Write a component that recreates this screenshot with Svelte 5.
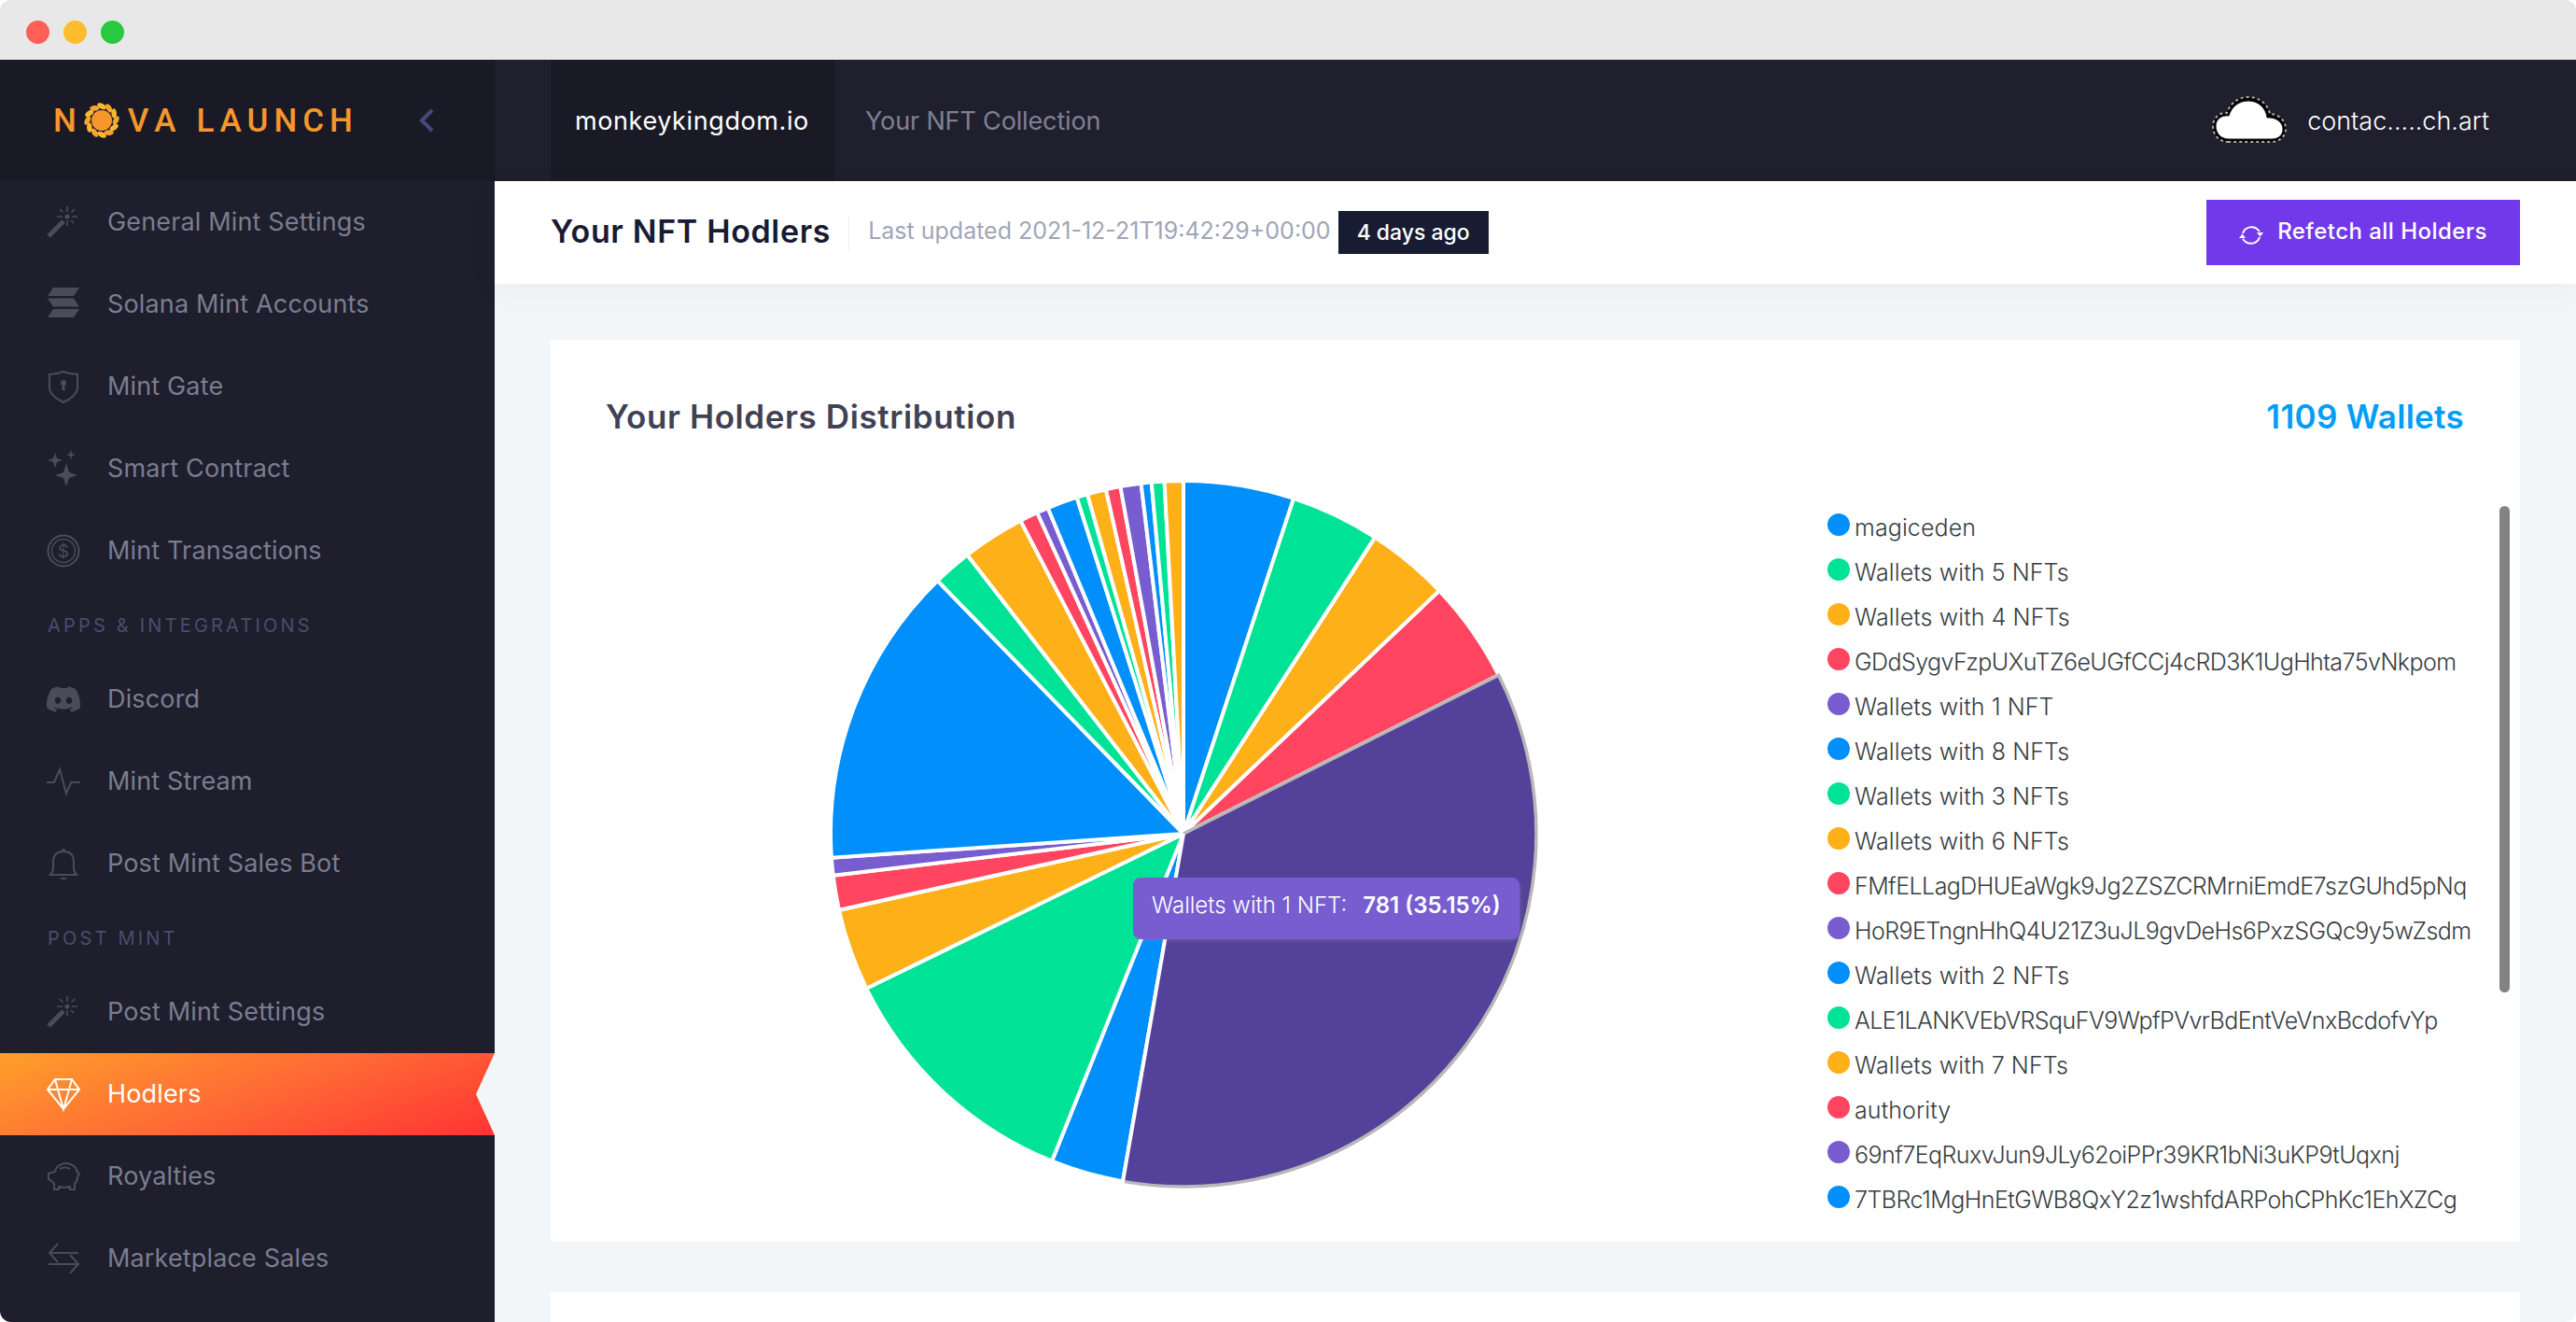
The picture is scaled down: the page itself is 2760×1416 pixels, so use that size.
<script>
  const palette = ['#008ffb', '#00e396', '#feb019', '#ff4560', '#775dd0']
  // slice end angles in degrees, clockwise from 12 o'clock
  const ends = [18.2, 32.9, 46.5, 63.3, 189.9, 201.9, 244, 257.5, 263.2, 266.1, 315.8, 322.2, 332.5, 335.5, 337.4, 342.4, 344.2, 347.3, 349.7, 353.1, 354.8, 356.9, 360]
  const activeIndex = 4
  const cx = 388
  const cy = 388
  const r = 378

  function point(deg, radius) {
    const a = (deg * Math.PI) / 180
    return `${(cx + radius * Math.sin(a)).toFixed(2)} ${(cy - radius * Math.cos(a)).toFixed(2)}`
  }
  function sector(from, to, radius) {
    const large = to - from > 180 ? 1 : 0
    return `M${cx} ${cy} L${point(from, radius)} A${radius} ${radius} 0 ${large} 1 ${point(to, radius)} Z`
  }
  const slices = ends.map((end, i) => ({
    from: i === 0 ? 0 : ends[i - 1],
    to: end,
    color: palette[i % palette.length]
  }))
  const active = slices[activeIndex]

  const legend = [
    'magiceden', 'Wallets with 5 NFTs', 'Wallets with 4 NFTs', 'GDdSygvFzpUXuTZ6eUGfCCj4cRD3K1UgHhta75vNkpom',
    'Wallets with 1 NFT', 'Wallets with 8 NFTs', 'Wallets with 3 NFTs', 'Wallets with 6 NFTs',
    'FMfELLagDHUEaWgk9Jg2ZSZCRMrniEmdE7szGUhd5pNq', 'HoR9ETngnHhQ4U21Z3uJL9gvDeHs6PxzSGQc9y5wZsdm',
    'Wallets with 2 NFTs', 'ALE1LANKVEbVRSquFV9WpfPVvrBdEntVeVnxBcdofvYp', 'Wallets with 7 NFTs', 'authority',
    '69nf7EqRuxvJun9JLy62oiPPr39KR1bNi3uKP9tUqxnj', '7TBRc1MgHnEtGWB8QxY2z1wshfdARPohCPhKc1EhXZCg'
  ]

  const menu = [
    { label: 'General Mint Settings', icon: 'wand' },
    { label: 'Solana Mint Accounts', icon: 'solana' },
    { label: 'Mint Gate', icon: 'shield' },
    { label: 'Smart Contract', icon: 'sparkle' },
    { label: 'Mint Transactions', icon: 'coin' },
    { section: 'Apps & Integrations' },
    { label: 'Discord', icon: 'discord' },
    { label: 'Mint Stream', icon: 'pulse' },
    { label: 'Post Mint Sales Bot', icon: 'bell' },
    { section: 'Post Mint' },
    { label: 'Post Mint Settings', icon: 'wand' },
    { label: 'Hodlers', icon: 'diamond', active: true },
    { label: 'Royalties', icon: 'piggy' },
    { label: 'Marketplace Sales', icon: 'swap' }
  ]
  const sunRays = Array.from({ length: 12 }, (_, i) => i * 30)
</script>

{#snippet icon(name)}
  <svg class="icon" viewBox="0 0 36 36">
    {#if name === 'wand'}
      <path class="thick" d="M2 33 L18 17" />
      <path class="thin" d="M22 1v6M22 16v6M11 12h6M27 12h6M14 4l3.500 3.500M30 4l-3.500 3.500M26 16l3 3" />
      <circle class="solid" cx="22" cy="12" r="2.600" />
    {:else if name === 'solana'}
      <path class="solid" d="M7 0H35L29 9H1ZM1 11.500H29L35 20.500H7ZM7 23H35L29 32H1Z" />
    {:else if name === 'shield'}
      <path class="line" d="M18 2 C23 4 28 5 33 5 V19 C33 26 26 31 18 35 C10 31 3 26 3 19 V5 C8 5 13 4 18 2Z" />
      <circle class="solid" cx="18" cy="14" r="3" />
      <path class="solid" d="M16.800 15h2.400l.6 7h-3.600Z" />
    {:else if name === 'sparkle'}
      <path class="solid" d="M21 12 L24 22 L33 25 L24 28 L21 37 L18 28 L9 25 L18 22Z" />
      <path class="solid" d="M9 1 L11 7 L17 9 L11 11 L9 17 L7 11 L1 9 L7 7Z" />
      <path class="solid" d="M26 -2 L27.200 1.800 L31 3 L27.200 4.200 L26 8 L24.800 4.200 L21 3 L24.800 1.800Z" />
    {:else if name === 'coin'}
      <circle class="line" cx="18" cy="18" r="16.500" />
      <circle class="line thinner" cx="18" cy="18" r="12.500" />
      <text x="18" y="24.500" text-anchor="middle" class="dollar">$</text>
    {:else if name === 'discord'}
      <path class="solid" transform="scale(1.500)" d="M20.317 4.3698a19.7913 19.7913 0 00-4.8851-1.5152.0741.0741 0 00-.0785.0371c-.211.3753-.4447.8648-.6083 1.2495-1.8447-.2762-3.68-.2762-5.4868 0-.1636-.3933-.4058-.8742-.6177-1.2495a.077.077 0 00-.0785-.037 19.7363 19.7363 0 00-4.8852 1.515.0699.0699 0 00-.0321.0277C.5334 9.0458-.319 13.5799.0992 18.0578a.0824.0824 0 00.0312.0561c2.0528 1.5076 4.0413 2.4228 5.9929 3.0294a.0777.0777 0 00.0842-.0276c.4616-.6304.8731-1.2952 1.226-1.9942a.076.076 0 00-.0416-.1057c-.6528-.2476-1.2743-.5495-1.8722-.8923a.077.077 0 01-.0076-.1277c.1258-.0943.2517-.1923.3718-.2914a.0743.0743 0 01.0776-.0105c3.9278 1.7933 8.18 1.7933 12.0614 0a.0739.0739 0 01.0785.0095c.1202.099.246.1981.3728.2924a.077.077 0 01-.0066.1276 12.2986 12.2986 0 01-1.873.8914.0766.0766 0 00-.0407.1067c.3604.698.7719 1.3628 1.225 1.9932a.076.076 0 00.0842.0286c1.961-.6067 3.9495-1.5219 6.0023-3.0294a.077.077 0 00.0313-.0552c.5004-5.177-.8382-9.6739-3.5485-13.6604a.061.061 0 00-.0312-.0286zM8.02 15.3312c-1.1825 0-2.1569-1.0857-2.1569-2.419 0-1.3332.9555-2.4189 2.157-2.4189 1.2108 0 2.1757 1.0952 2.1568 2.419 0 1.3332-.9555 2.4189-2.1569 2.4189zm7.9748 0c-1.1825 0-2.1569-1.0857-2.1569-2.419 0-1.3332.9554-2.4189 2.1569-2.4189 1.2108 0 2.1757 1.0952 2.1568 2.419 0 1.3332-.946 2.4189-2.1568 2.4189Z" />
    {:else if name === 'pulse'}
      <path class="line" d="M0 19 H8 L14 5 L21 31 L26 19 H36" />
    {:else if name === 'bell'}
      <path class="line" d="M4 30 C6 28 7 26 7 22 V16 C7 9 11 5 18 5 C25 5 29 9 29 16 V22 C29 26 30 28 32 30Z" />
      <path class="solid" d="M15.500 5 C15.500 1 20.500 1 20.500 5ZM14 33H22C21 36 15 36 14 33Z" />
    {:else if name === 'diamond'}
      <path class="line" d="M9 2 H27 L35 13 L18 34 L1 13 Z M1 13 H35 M9 2 L12 13 L18 34 L24 13 L27 2" />
    {:else if name === 'piggy'}
      <path class="line" d="M9 13 C10 7 16 4 21 4 C27 4 32 8 33 14 L35 15 L33 19 C33 23 31 25 30 26 V32 H25 V29 C22 30 17 30 13 29 V32 H8 V26 C6 24 5 22 2 21 V15 L5 14 Z" />
      <path class="line" d="M14 10 C17 8 22 8 25 10" />
    {:else if name === 'swap'}
      <path class="line" d="M34 12 H4 M12 2 L3 12 L12 22 M2 24 H33 M25 14 L34 24 L25 34" />
    {/if}
  </svg>
{/snippet}

<div class="window">
  <div class="titlebar">
    <span class="dot red"></span>
    <span class="dot yellow"></span>
    <span class="dot green"></span>
  </div>

  <div class="app">
    <aside class="sidebar">
      <div class="brand">
        <div class="logo">
          <span>N</span>
          <svg class="sun" viewBox="0 0 40 40">
            {#each sunRays as deg}
              <ellipse cx="20" cy="4.800" rx="5.200" ry="2.800" fill={deg % 60 === 0 ? '#fdb92e' : '#f7a52b'} transform="rotate({deg} 20 20) rotate(28 20 4.800)" />
            {/each}
            <circle cx="20" cy="20" r="11" fill="#f7972b" />
          </svg>
          <span class="logo-v">VA</span>
          <span class="logo-word">LAUNCH</span>
        </div>
        <svg class="collapse" viewBox="0 0 16 26"><path d="M14 2 L3 13 L14 24" /></svg>
      </div>
      <nav>
        {#each menu as item}
          {#if item.section}
            <div class="section">{item.section}</div>
          {:else}
            <div class="item" class:active={item.active}>
              {@render icon(item.icon)}
              <span>{item.label}</span>
            </div>
          {/if}
        {/each}
      </nav>
    </aside>

    <div class="page">
      <header class="topbar">
        <div class="tab current">monkeykingdom.io</div>
        <div class="tab">Your NFT Collection</div>
        <div class="account">
          <svg class="cloud" viewBox="0 0 80 52">
            <path class="cloud-out" d="M18 49 C7 49 1 41 1 32 C1 23 9 17 16 18 C19 8 28 1 39 1 C51 1 60 9 62 19 C71 19 79 26 79 35 C79 43 72 49 64 49 Z" />
            <path class="cloud-in" d="M18 46 C9 46 4 39 4 32 C4 25 10 20 18 21 C21 11 29 5 39 5 C50 5 58 13 59 23 C68 22 76 28 76 35 C76 42 71 46 64 46 Z" />
          </svg>
          <span>contac.....ch.art</span>
        </div>
      </header>

      <div class="subheader">
        <h1>Your NFT Hodlers</h1>
        <span class="updated">Last updated 2021-12-21T19:42:29+00:00</span>
        <span class="badge">4 days ago</span>
        <button type="button" class="refetch">
          <svg viewBox="0 0 26 24">
            <path d="M4 10 C6 3 16 0 22 8" />
            <path d="M22 14 C20 21 10 24 4 16" />
            <path class="head" d="M19 9 L26 9 L22.500 13.500Z" />
            <path class="head" d="M0 15 L7 15 L3.500 10.500Z" />
          </svg>
          <span>Refetch all Holders</span>
        </button>
      </div>

      <main>
        <section class="card">
          <div class="card-head">
            <h2>Your Holders Distribution</h2>
            <span class="wallets">1109 Wallets</span>
          </div>
          <div class="card-body">
            <div class="chart">
              <svg width="776" height="776" viewBox="0 0 776 776">
                {#each slices as s, i}
                  {#if i !== activeIndex}
                    <path d={sector(s.from, s.to, r)} fill={s.color} stroke="#fff" stroke-width="4" />
                  {/if}
                {/each}
                <path d={sector(active.from, active.to, r - 1)} fill="#54429a" />
                <path class="hover-edge" d="M{cx} {cy} L{point(active.from, r)} A{r} {r} 0 0 1 {point(active.to, r)}" />
                <path d="M{cx} {cy} L{point(active.to, r + 3)}" stroke="#fff" stroke-width="4" />
              </svg>
              <div class="tooltip">
                <span>Wallets with 1 NFT:</span>
                <b>781 (35.15%)</b>
              </div>
            </div>
            <div class="legend">
              {#each legend as name, i}
                <div class="legend-row">
                  <span class="marker" style="background: {palette[i % palette.length]}"></span>
                  <span class="legend-text" class:long={name.length > 30}>{name}</span>
                </div>
              {/each}
              <div class="scrollbar"></div>
            </div>
          </div>
        </section>
        <section class="card next"></section>
      </main>
    </div>
  </div>
</div>

<style>
  :global(body) {
    background: #fff;
    font-family: Inter, "Noto Sans", sans-serif;
  }
  .window {
    width: 2760px;
    height: 1416px;
    display: flex;
    flex-direction: column;
    overflow: hidden;
    border-radius: 12px;
  }
  .titlebar {
    height: 64px;
    flex: none;
    display: flex;
    align-items: center;
    gap: 15px;
    padding-left: 28px;
    background: #e8e8e8;
    box-sizing: border-box;
    padding-top: 4px;
  }
  .dot {
    width: 25px;
    height: 25px;
    border-radius: 50%;
  }
  .red { background: #ff5f57; }
  .yellow { background: #febc2e; }
  .green { background: #28c840; }

  .app {
    flex: 1;
    display: flex;
    min-height: 0;
  }
  .sidebar {
    width: 530px;
    flex: none;
    background: #1e1e2d;
  }
  .brand {
    height: 130px;
    background: #1a1a27;
    display: flex;
    align-items: center;
    padding-left: 57px;
    position: relative;
  }
  .logo {
    display: flex;
    align-items: center;
    color: #f7972b;
    font: 500 35px Roboto, sans-serif;
    letter-spacing: 6px;
    line-height: 1;
  }
  .sun {
    width: 40px;
    height: 40px;
    margin: 0 8px 0 1px;
  }
  .logo-v { letter-spacing: 7px; }
  .logo-word { margin-left: 15px; }
  .collapse {
    width: 16px;
    height: 26px;
    margin-left: auto;
    margin-right: 65px;
    fill: none;
    stroke: #454a7c;
    stroke-width: 4;
  }
  .item {
    height: 88px;
    display: flex;
    align-items: center;
    gap: 29px;
    padding-left: 50px;
    color: #7a7d90;
    font-size: 27px;
    font-weight: 400;
    letter-spacing: 0.15px;
    position: relative;
  }
  .item span { margin-bottom: 2px; }
  .section {
    height: 71px;
    display: flex;
    align-items: center;
    padding-left: 51px;
    color: #4b4d6c;
    font-size: 20px;
    text-transform: uppercase;
    letter-spacing: 3.200px;
  }
  .icon {
    width: 36px;
    height: 36px;
    flex: none;
    overflow: visible;
    color: #4a4c59;
  }
  .icon .solid { fill: currentColor; }
  .icon .line, .icon .thin, .icon .thick {
    fill: none;
    stroke: currentColor;
    stroke-width: 2;
  }
  .icon .thin { stroke-width: 1.600; }
  .icon .thick { stroke-width: 5; }
  .icon .thinner { stroke-width: 1.500; }
  .icon .dollar {
    fill: currentColor;
    font: 400 19px Inter, sans-serif;
  }
  .item.active {
    color: #fff;
    background: linear-gradient(160deg, #ff9f2b 0%, #ff6b35 50%, #ff3333 100%);
  }
  .item.active .icon { color: #fff; }
  .item.active::after {
    content: '';
    position: absolute;
    right: 0;
    top: 0;
    width: 20px;
    height: 100%;
    background: #f3f6f9;
    clip-path: polygon(100% 0, 0 50%, 100% 100%);
  }

  .page {
    flex: 1;
    min-width: 0;
    display: flex;
    flex-direction: column;
    background: #f3f6f9;
  }
  .topbar {
    height: 130px;
    flex: none;
    display: flex;
    align-items: center;
    padding-left: 60px;
    background: #1f1f2d;
  }
  .tab {
    height: 100%;
    display: flex;
    align-items: center;
    padding: 0 26px;
    color: #7f8095;
    font-size: 27px;
    letter-spacing: -0.15px;
  }
  .tab.current {
    color: #fff;
    background: #1a1a27;
    box-sizing: border-box;
    width: 304px;
    margin-right: 7px;
    letter-spacing: 0.6px;
  }
  .account {
    margin-left: auto;
    margin-right: 93px;
    display: flex;
    align-items: center;
    gap: 22px;
    color: #fff;
    font-size: 27px;
    font-weight: 300;
  }
  .cloud {
    width: 80px;
    height: 52px;
  }
  .cloud-out {
    fill: #000;
    stroke: #aaa;
    stroke-width: 2;
    stroke-dasharray: 3 3;
  }
  .cloud-in {
    fill: #fff;
    stroke: #111;
    stroke-width: 1;
  }

  .subheader {
    height: 110px;
    flex: none;
    display: flex;
    align-items: center;
    padding: 0 60px;
    background: #fff;
    box-shadow: 0 8px 30px rgba(82, 63, 105, 0.05);
    position: relative;
  }
  h1 {
    margin: 0;
    padding-right: 19px;
    height: 40px;
    line-height: 38px;
    border-right: 1px solid #eff2f5;
    color: #181c32;
    font-size: 34px;
    font-weight: 600;
    letter-spacing: 0.65px;
  }
  .updated {
    margin: 0 0 4px 20px;
    color: #a1a5b7;
    font-size: 25px;
  }
  .badge {
    margin-left: 8px;
    height: 46px;
    padding: 0 20px;
    display: flex;
    align-items: center;
    background: #181c32;
    color: #fff;
    font-size: 23px;
    font-weight: 500;
  }
  .refetch {
    margin-left: auto;
    width: 336px;
    height: 70px;
    border: none;
    display: flex;
    align-items: center;
    justify-content: center;
    gap: 15px;
    background: #7239ea;
    color: #fff;
    font: 500 24px Inter, sans-serif;
    letter-spacing: 0.45px;
  }
  .refetch span { margin-bottom: 4px; }
  .refetch svg {
    width: 26px;
    height: 24px;
    fill: none;
    stroke: #fff;
    stroke-width: 2;
    margin-top: 6px;
  }
  .refetch .head {
    fill: #fff;
    stroke: none;
  }

  main {
    flex: 1;
    min-height: 0;
    overflow: hidden;
    padding: 60px 60px 0;
  }
  .card {
    height: 966px;
    background: #fff;
  }
  .card.next {
    margin-top: 54px;
    height: 400px;
  }
  .card-head {
    height: 141px;
    box-sizing: border-box;
    padding: 58px 60px 0 59px;
    display: flex;
    justify-content: space-between;
    align-items: flex-start;
  }
  h2 {
    margin: 0;
    line-height: 48px;
    color: #3f4254;
    font-size: 35px;
    font-weight: 600;
    letter-spacing: 0.6px;
  }
  .wallets {
    line-height: 48px;
    color: #009ef7;
    font-size: 35px;
    font-weight: 600;
    letter-spacing: 0.3px;
  }
  .card-body {
    display: flex;
    padding-left: 290px;
  }
  .chart {
    width: 776px;
    height: 776px;
    flex: none;
    position: relative;
  }
  .chart svg { display: block; overflow: visible; }
  .hover-edge {
    fill: none;
    stroke: #b8b8b8;
    stroke-width: 3.500;
  }
  .tooltip {
    position: absolute;
    left: 334px;
    top: 435px;
    width: 414px;
    height: 66px;
    box-sizing: border-box;
    padding: 0 0 7px 20px;
    display: flex;
    align-items: center;
    gap: 17px;
    border-radius: 8px;
    background: #775dd0;
    box-shadow: 2px 2px 6px -4px #999;
    color: #fff;
    font-size: 24px;
    font-weight: 300;
  }
  .tooltip b { font-weight: 600; }
  .legend {
    flex: 1;
    margin-left: 302px;
    padding-top: 33px;
    position: relative;
    color: #373d3f;
    font-size: 25px;
    font-weight: 300;
  }
  .legend-row {
    height: 48px;
    display: flex;
    align-items: center;
    gap: 5px;
  }
  .marker {
    width: 24px;
    height: 24px;
    flex: none;
    border-radius: 50%;
  }
  .legend-text {
    white-space: nowrap;
    margin-top: 6px;
    letter-spacing: 0.1px;
  }
  .legend-text.long { letter-spacing: -0.55px; }
  .scrollbar {
    position: absolute;
    right: 11px;
    top: 37px;
    width: 11px;
    height: 521px;
    border-radius: 6px;
    background: #828282;
  }
</style>
